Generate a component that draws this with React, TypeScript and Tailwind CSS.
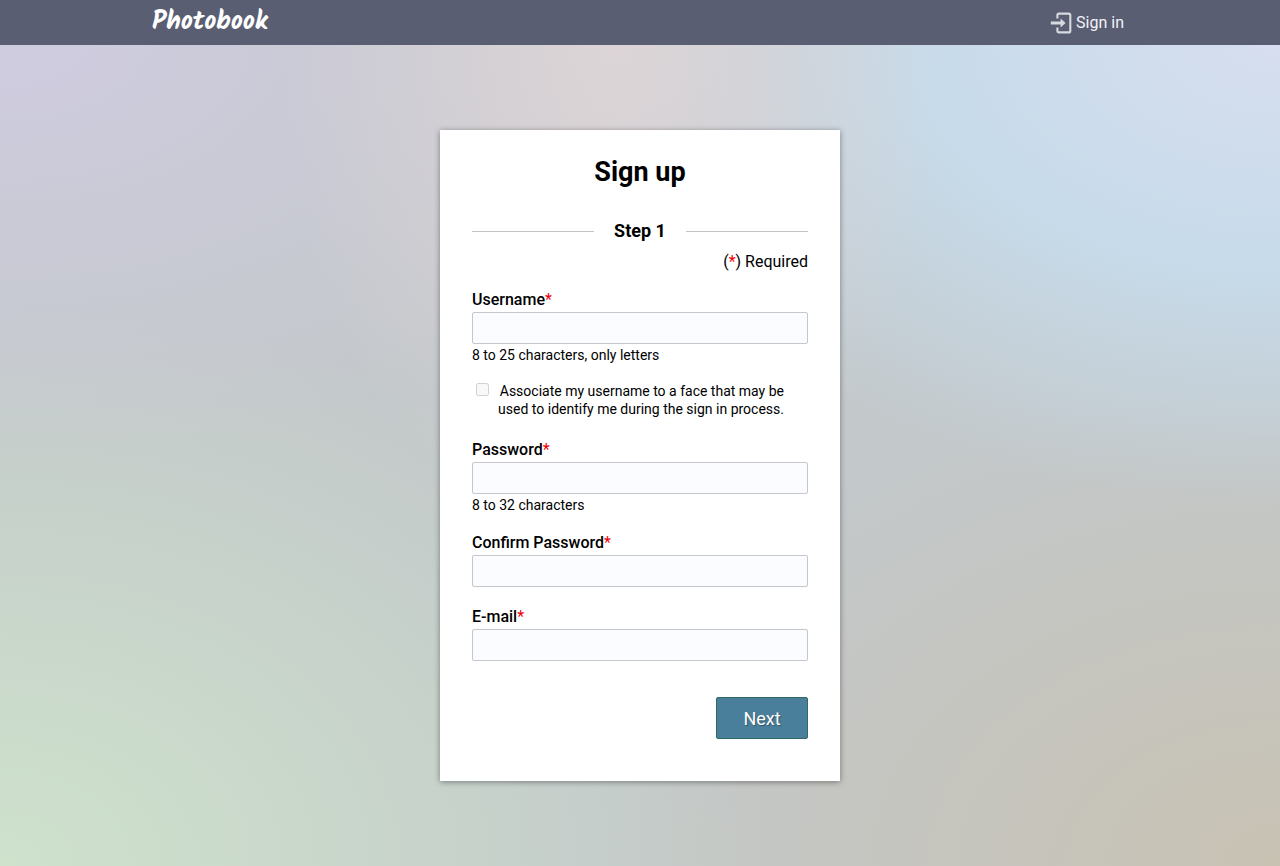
import React from "react";

type FieldProps = {
  id: string;
  label: string;
  type?: string;
  hint?: string;
};

function Field({ id, label, type = "text", hint }: FieldProps) {
  return (
    <div className="flex flex-col">
      <label htmlFor={id} className="mb-0.5 text-base leading-5 font-medium">
        {label}
        <span className="font-normal text-[#f00000]">*</span>
      </label>
      <input
        id={id}
        type={type}
        aria-describedby={hint ? `${id}-hint` : undefined}
        className="h-8 w-full rounded-xs border border-[#c5c8cb] bg-[#fbfcff] px-2 text-base"
      />
      {hint && (
        <p id={`${id}-hint`} className="mt-px text-[14px] leading-5">
          {hint}
        </p>
      )}
    </div>
  );
}

function SignInIcon() {
  return (
    <svg width="22" height="22" viewBox="0 0 22 22" fill="none" aria-hidden="true">
      <path
        d="M7.4 6.4V3.2C7.4 2.2 8 1.6 8.9 1.6H18.6C19.6 1.6 20.3 2.3 20.3 3.2V18.9C20.3 19.8 19.6 20.4 18.6 20.4H8.9C8 20.4 7.4 19.8 7.4 18.8V15.6"
        stroke="#d7dade"
        strokeWidth="2.1"
      />
      <path d="M0.8 9.5H10.6V6.5L15.6 11L10.6 15.5V12.5H0.8Z" fill="#d7dade" />
    </svg>
  );
}

export default function App() {
  return (
    <div className="flex min-h-screen flex-col bg-[#c3c8ca] bg-[radial-gradient(26%_60%_at_48%_4%,#ddd5d7_0%,#ddd5d700_100%),radial-gradient(57%_54%_at_100%_4%,#d7deef_0%,#c7dbea_50%,#c7dbea00_100%),radial-gradient(58%_50%_at_0%_4%,#cfcce0_0%,#cfcce000_100%),radial-gradient(60%_65%_at_0%_100%,#cee2cc_0%,#cee2cc00_100%),radial-gradient(55%_55%_at_100%_100%,#c8c2b3_0%,#c8c2b300_100%)] font-[Roboto,sans-serif] text-black">
      <header className="bg-[#595e72]">
        <div className="mx-auto flex h-[45px] max-w-[1008px] items-center justify-between px-4">
          <a
            href="#"
            className="pb-0.5 font-[Kalam,'Caveat_Brush',cursive] text-[26px] leading-8 font-bold text-white"
          >
            Photobook
          </a>
          <a href="#sign-in" className="mr-1 flex items-center gap-1 text-base text-[#f3f4f8]">
            <SignInIcon />
            Sign in
          </a>
        </div>
      </header>

      <main className="flex justify-center px-4 py-[85px]">
        <form
          onSubmit={(event) => event.preventDefault()}
          className="flex w-full max-w-[400px] flex-col bg-white px-8 pt-6 pb-[42px] shadow-[0_1px_6px_rgba(0,0,0,0.4)]"
        >
          <h1 className="text-center text-[27px] leading-9 font-bold">Sign up</h1>

          <div className="mt-[29px] flex items-center">
            <hr className="grow border-[#c4c4c4]" />
            <h2 className="px-5 text-[18px] leading-6 font-bold">Step 1</h2>
            <hr className="grow border-[#c4c4c4]" />
          </div>

          <p className="mt-[9px] text-right text-base leading-5">
            (<span className="text-[#f00000]">*</span>) Required
          </p>

          <div className="mt-[18px]">
            <Field id="username" label="Username" hint="8 to 25 characters, only letters" />
          </div>

          <div className="mt-[17px] flex items-start pr-6 pl-1">
            <input
              id="associate-face"
              type="checkbox"
              disabled
              className="mt-px size-[13px] shrink-0"
            />
            <label htmlFor="associate-face" className="grow text-right text-[14px] leading-[18px]">
              Associate my username to a face that may be
              <br />
              used to identify me during the sign in process.
            </label>
          </div>

          <div className="mt-[22px]">
            <Field id="password" label="Password" type="password" hint="8 to 32 characters" />
          </div>
          <div className="mt-[18px]">
            <Field id="confirm-password" label="Confirm Password" type="password" />
          </div>
          <div className="mt-5">
            <Field id="email" label="E-mail" type="email" />
          </div>

          <button
            type="submit"
            className="mt-9 h-[42px] w-[92px] self-end rounded-xs border border-[#2f6a63] bg-[#4a7f9c] text-[18px] text-white text-shadow-[1px_1px_1px_rgba(0,0,0,0.35)]"
          >
            Next
          </button>
        </form>
      </main>
    </div>
  );
}
